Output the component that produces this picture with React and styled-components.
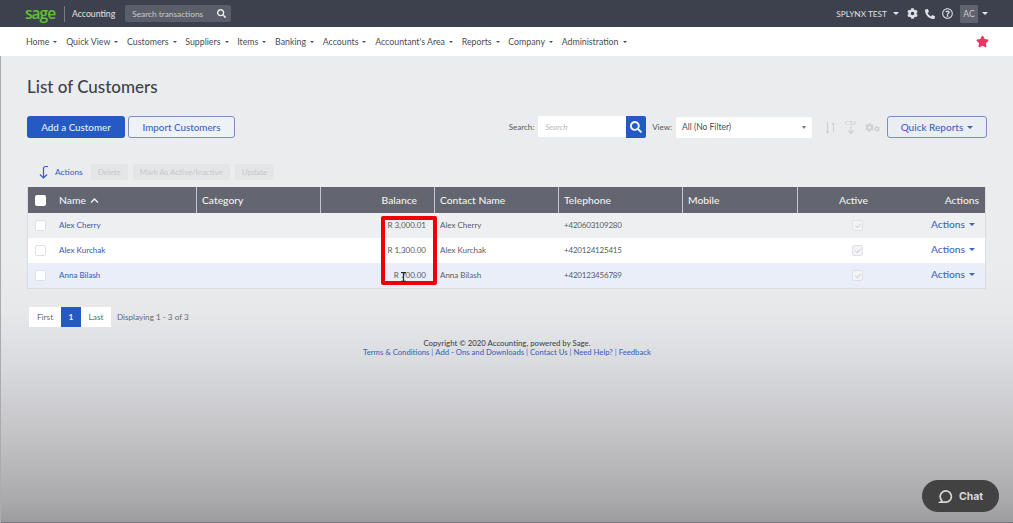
import styled, { createGlobalStyle } from "styled-components";
import { FaCog, FaPhone, FaRegQuestionCircle, FaSearch, FaStar, FaChevronUp, FaCheck } from "react-icons/fa";

const GlobalStyle = createGlobalStyle`
  html, body { margin: 0; padding: 0; }
  body { font-family: Lato, "Open Sans", sans-serif; overflow: hidden; }
  * { box-sizing: border-box; }
`;

const MENU = ["Home", "Quick View", "Customers", "Suppliers", "Items", "Banking", "Accounts", "Accountant's Area", "Reports", "Company", "Administration"];

const CUSTOMERS = [
  { name: "Alex Cherry", balance: "R 3,000.01", phone: "+420603109280", tone: "#eeeff1" },
  { name: "Alex Kurchak", balance: "R 1,300.00", phone: "+420124125415", tone: "#ffffff" },
  { name: "Anna Bilash", balance: "R 700.00", phone: "+420123456789", tone: "#e9eef9" },
];

const COLUMNS = "168px 124px 114px 124px 124px 115px 1fr";

const App = () => {
  return (
    <Page>
      <GlobalStyle />
      <TopBar>
        <Logo>sage</Logo>
        <Product>Accounting</Product>
        <SearchTransactions>
          <span>Search transactions</span>
          <FaSearch size={9} />
        </SearchTransactions>
        <TopRight>
          <Company>SPLYNX TEST</Company>
          <TopCaret />
          <TopIcons>
            <FaCog size={11} />
            <FaPhone size={10} style={{ transform: "scaleX(-1)" }} />
            <FaRegQuestionCircle size={11} />
          </TopIcons>
          <Avatar>AC</Avatar>
          <TopCaret />
        </TopRight>
      </TopBar>

      <Nav>
        {MENU.map((item) => (
          <NavItem key={item}>
            {item}
            <NavCaret />
          </NavItem>
        ))}
        <Favourite>
          <FaStar size={13} />
        </Favourite>
      </Nav>

      <Content>
        <Title>List of Customers</Title>

        <Toolbar>
          <ButtonGroup>
            <PrimaryButton>Add a Customer</PrimaryButton>
            <OutlineButton>Import Customers</OutlineButton>
          </ButtonGroup>
          <Filters>
            <FilterLabel>Search:</FilterLabel>
            <SearchField>
              <SearchInput>Search</SearchInput>
              <SearchButton>
                <FaSearch size={12} />
              </SearchButton>
            </SearchField>
            <FilterLabel>View:</FilterLabel>
            <ViewSelect>
              All (No Filter)
              <SelectCaret />
            </ViewSelect>
            <ToolIcons>
              <svg width="11" height="13" viewBox="0 0 11 13" fill="none" stroke="#cfd1d5" strokeWidth="1.1">
                <path d="M2.5 1v11M1 10l1.5 2L4 10M8.5 2v9.5M7 3.5L8.5 2" />
              </svg>
              <CsvIcon>
                CSV
                <svg width="8" height="8" viewBox="0 0 8 8" fill="none" stroke="#cfd1d5" strokeWidth="1.2">
                  <path d="M4 0v7M1 4.5L4 7.5l3-3" />
                </svg>
              </CsvIcon>
              <GearPair>
                <FaCog size={9} />
                <FaCog size={6} />
              </GearPair>
            </ToolIcons>
            <QuickReports>
              Quick Reports
              <ButtonCaret />
            </QuickReports>
          </Filters>
        </Toolbar>

        <BulkRow>
          <svg width="12" height="14" viewBox="0 0 12 14" fill="none" stroke="#2f5fc4" strokeWidth="1.2">
            <path d="M11 1.5H8.5C7.3 1.5 6.5 2.3 6.5 3.5V12.5M3 9.5l3.5 3.5L10 9.5" />
          </svg>
          <BulkLabel>Actions</BulkLabel>
          <DisabledButton>Delete</DisabledButton>
          <DisabledButton>Mark As Active/Inactive</DisabledButton>
          <DisabledButton>Update</DisabledButton>
        </BulkRow>

        <Table>
          <HeadRow>
            <HeadCell>
              <HeadCheck />
              <span>Name</span>
              <FaChevronUp size={9} />
            </HeadCell>
            <HeadCell $divided>Category</HeadCell>
            <HeadCell $divided $align="flex-end">Balance</HeadCell>
            <HeadCell $divided>Contact Name</HeadCell>
            <HeadCell $divided>Telephone</HeadCell>
            <HeadCell $divided>Mobile</HeadCell>
            <HeadCell $divided $split>
              <span>Active</span>
              <span>Actions</span>
            </HeadCell>
          </HeadRow>
          {CUSTOMERS.map((c) => (
            <Row key={c.name} $tone={c.tone}>
              <NameCell>
                <RowCheck />
                <NameLink>{c.name}</NameLink>
              </NameCell>
              <Cell />
              <BalanceCell>{c.balance}</BalanceCell>
              <Cell>{c.name}</Cell>
              <PhoneCell>{c.phone}</PhoneCell>
              <Cell />
              <EndCell>
                <ActiveCheck>
                  <FaCheck size={6} />
                </ActiveCheck>
                <RowActions>
                  Actions
                  <ButtonCaret />
                </RowActions>
              </EndCell>
            </Row>
          ))}
        </Table>

        <PagerRow>
          <Pager>
            <PageLink $width={32}>First</PageLink>
            <PageLink $width={20} $active>1</PageLink>
            <PageLink $width={30}>Last</PageLink>
          </Pager>
          <PagerText>Displaying 1 - 3 of 3</PagerText>
        </PagerRow>

        <Footer>
          <FooterLine>Copyright © 2020 Accounting, powered by Sage.</FooterLine>
          <FooterLinks>
            <a>Terms &amp; Conditions</a> | <a>Add - Ons and Downloads</a> | <a>Contact Us</a> | <a>Need Help?</a> | <a>Feedback</a>
          </FooterLinks>
        </Footer>
      </Content>

      <Annotation />
      <TextCursor width="7" height="10" viewBox="0 0 7 10" fill="none" stroke="#2b2b2b" strokeWidth="1.2">
        <path d="M1 .6h5M3.5.6v8.800M1 9.400h5" />
      </TextCursor>
      <ChatButton>
        <svg width="15" height="15" viewBox="0 0 16 16" fill="none" stroke="#d8d8d8" strokeWidth="1.8">
          <path d="M4 12.200A6 6 0 1 1 8.600 14H2.600c.8-.5 1.300-1 1.400-1.800z" />
        </svg>
        Chat
      </ChatButton>
    </Page>
  );
};

export default App;

const Page = styled.div`
  position: relative;
  width: 1013px;
  height: 523px;
  overflow: hidden;
  background: linear-gradient(180deg, #ebecee 0, #ebecee 260px, #e7e8ea 310px, #dbdce0 360px, #c2c2c5 440px, #aaaaad 500px, #9c9c9f 522px, #55565a 523px);
  box-shadow: inset 1px 0 0 #a9abaf;
`;

const TopBar = styled.header`
  display: flex;
  align-items: center;
  height: 27px;
  padding: 0 25px;
  background: #3d414d;
  color: #e6e7ea;
`;

const Logo = styled.div`
  width: 39px;
  font-family: "Open Sans", sans-serif;
  font-size: 15.5px;
  font-weight: 600;
  letter-spacing: -1px;
  line-height: 27px;
  color: #5fc42f;
`;

const Product = styled.div`
  height: 16px;
  padding-left: 7px;
  margin-right: 10px;
  border-left: 1px solid #777b85;
  font-size: 8.7px;
  line-height: 16px;
  color: #e2e3e6;
`;

const SearchTransactions = styled.div`
  display: flex;
  align-items: center;
  justify-content: space-between;
  width: 106px;
  height: 17px;
  padding: 0 5px 0 7px;
  border-radius: 2px;
  background: #5a5e69;
  font-size: 8.3px;
  color: #c8cad0;
  svg { color: #eceded; }
`;

const TopRight = styled.div`
  display: flex;
  align-items: center;
  gap: 4px;
  margin-left: auto;
  font-size: 8.3px;
  color: #dfe0e3;
`;

const Company = styled.span`
  margin-right: 2px;
`;

const TopIcons = styled.div`
  display: flex;
  align-items: center;
  gap: 7px;
  margin: 0 3px 0 4px;
`;

const TopCaret = styled.i`
  border-top: 3px solid #e6e7ea;
  border-left: 3px solid transparent;
  border-right: 3px solid transparent;
`;

const Avatar = styled.div`
  display: flex;
  align-items: center;
  justify-content: center;
  width: 18px;
  height: 18px;
  border-radius: 1px;
  background: #5f636e;
  font-size: 8.5px;
  color: #c9cbd0;
`;

const Nav = styled.nav`
  display: flex;
  align-items: center;
  gap: 8.7px;
  height: 29px;
  padding: 0 24px 0 26px;
  background: #fff;
`;

const NavItem = styled.div`
  display: flex;
  align-items: center;
  gap: 4px;
  font-size: 8.8px;
  color: #4a4d55;
`;

const NavCaret = styled.i`
  border-top: 2.5px solid #4a4d55;
  border-left: 2px solid transparent;
  border-right: 2px solid transparent;
`;

const Favourite = styled.div`
  display: flex;
  margin-left: auto;
  color: #e8365f;
`;

const Content = styled.main`
  padding: 0 26px 0 27px;
`;

const Title = styled.h1`
  margin: 0;
  padding-top: 20px;
  height: 60px;
  font-size: 17px;
  font-weight: 500;
  line-height: 22px;
  color: #3f424a;
`;

const Toolbar = styled.div`
  display: flex;
  align-items: center;
  justify-content: space-between;
  height: 22px;
`;

const ButtonGroup = styled.div`
  display: flex;
  gap: 3px;
`;

const PrimaryButton = styled.div`
  display: flex;
  align-items: center;
  justify-content: center;
  width: 98px;
  height: 22px;
  border-radius: 3px;
  background: #2559c3;
  font-size: 9.8px;
  font-weight: 500;
  color: #e8edf8;
`;

const OutlineButton = styled(PrimaryButton)`
  width: 107px;
  border: 1px solid #7b8fb8;
  background: #eef1f6;
  color: #3f65bb;
`;

const Filters = styled.div`
  display: flex;
  align-items: center;
`;

const FilterLabel = styled.span`
  margin-right: 4px;
  font-size: 8px;
  color: #55585f;
`;

const SearchField = styled.div`
  display: flex;
  margin-right: 6px;
`;

const SearchInput = styled.div`
  display: flex;
  align-items: center;
  width: 88px;
  height: 21px;
  padding-left: 7px;
  border-radius: 2px 0 0 2px;
  background: #fff;
  font-size: 8px;
  font-style: italic;
  color: #b9bbc0;
`;

const SearchButton = styled.div`
  display: flex;
  align-items: center;
  justify-content: center;
  width: 20px;
  height: 22px;
  border-radius: 0 2px 2px 0;
  background: #2559c3;
  color: #f1f4fb;
`;

const ViewSelect = styled.div`
  display: flex;
  align-items: center;
  justify-content: space-between;
  width: 136px;
  height: 21px;
  padding: 0 6px;
  border-radius: 2px;
  background: #fff;
  font-size: 8.5px;
  color: #4a4d55;
`;

const SelectCaret = styled(NavCaret)`
  border-top-color: #77797f;
  border-top-width: 3px;
`;

const ToolIcons = styled.div`
  display: flex;
  align-items: center;
  gap: 9px;
  width: 75px;
  padding-left: 13px;
  color: #cfd1d5;
`;

const CsvIcon = styled.div`
  display: flex;
  flex-direction: column;
  align-items: center;
  font-size: 6px;
  line-height: 6px;
  color: #c6c8cc;
`;

const GearPair = styled.div`
  display: flex;
  align-items: flex-end;
`;

const QuickReports = styled.div`
  display: flex;
  align-items: center;
  justify-content: center;
  gap: 4px;
  width: 100px;
  height: 22px;
  border: 1px solid #7b8fb8;
  border-radius: 3px;
  background: #eaedf2;
  font-size: 10px;
  font-weight: 500;
  color: #3f65bb;
`;

const ButtonCaret = styled.i`
  border-top: 3px solid #3f65bb;
  border-left: 3px solid transparent;
  border-right: 3px solid transparent;
`;

const BulkRow = styled.div`
  display: flex;
  align-items: center;
  gap: 5px;
  height: 16px;
  margin-top: 26px;
  padding-left: 10px;
`;

const BulkLabel = styled.span`
  margin: 0 3px 0 1px;
  font-size: 8.3px;
  font-weight: 500;
  color: #3f65bb;
`;

const DisabledButton = styled.div`
  display: flex;
  align-items: center;
  height: 16px;
  padding: 0 7px;
  border-radius: 2px;
  background: #e4e5e7;
  font-size: 7.9px;
  color: #c8c9cd;
`;

const Table = styled.div`
  width: 959px;
  margin-top: 7px;
  border: 1px solid #d9dbde;
  border-top: 0;
`;

const HeadRow = styled.div`
  display: grid;
  grid-template-columns: ${COLUMNS};
  height: 26px;
  background: #636670;
`;

const HeadCell = styled.div`
  display: flex;
  align-items: center;
  justify-content: ${(p) => (p.$split ? "space-between" : p.$align || "flex-start")};
  gap: 4px;
  padding: 0 ${(p) => (p.$split ? "6px" : "17px")} 0 ${(p) => (p.$split ? "41px" : "5px")};
  border-left: ${(p) => (p.$divided ? "1px solid #c4c6cb" : "0")};
  font-size: 10.3px;
  font-weight: 500;
  color: #f0f1f3;
`;

const HeadCheck = styled.i`
  width: 11px;
  height: 11px;
  margin: 0 9px 0 2px;
  border-radius: 2px;
  background: #fff;
`;

const Row = styled.div`
  display: grid;
  grid-template-columns: ${COLUMNS};
  height: 25px;
  background: ${(p) => p.$tone};
`;

const Cell = styled.div`
  display: flex;
  align-items: center;
  padding: 0 6px 1px;
  font-size: 8px;
  color: #595c63;
`;

const BalanceCell = styled(Cell)`
  justify-content: flex-end;
  padding-right: 8px;
`;

const PhoneCell = styled(Cell)`
  letter-spacing: -0.2px;
`;

const NameCell = styled(Cell)`
  padding-left: 7px;
`;

const RowCheck = styled.i`
  width: 11px;
  height: 11px;
  margin: 1px 13px 0 0;
  border: 1px solid #dfe1e4;
  border-radius: 2px;
  background: #fff;
`;

const NameLink = styled.span`
  font-weight: 500;
  color: #3f65bb;
`;

const EndCell = styled.div`
  display: flex;
  align-items: center;
  justify-content: space-between;
  padding: 0 10px 0 55px;
`;

const ActiveCheck = styled.div`
  display: flex;
  align-items: center;
  justify-content: center;
  width: 11px;
  height: 11px;
  border: 1px solid #e0e1e4;
  border-radius: 2px;
  background: #f3f4f5;
  color: #d8d9dc;
`;

const RowActions = styled.div`
  display: flex;
  align-items: center;
  gap: 4px;
  padding-bottom: 3px;
  font-size: 10.2px;
  font-weight: 500;
  color: #3f65bb;
`;

const PagerRow = styled.div`
  display: flex;
  align-items: center;
  gap: 6px;
  margin-top: 18px;
  padding-left: 2px;
`;

const Pager = styled.div`
  display: flex;
  height: 20px;
`;

const PageLink = styled.div`
  display: flex;
  align-items: center;
  justify-content: center;
  width: ${(p) => p.$width}px;
  background: ${(p) => (p.$active ? "#2559c3" : "#fff")};
  font-size: 8.3px;
  font-weight: ${(p) => (p.$active ? 700 : 400)};
  color: ${(p) => (p.$active ? "#f1f4fb" : "#6a6d74")};
`;

const PagerText = styled.span`
  font-size: 8.15px;
  color: #66696f;
`;

const Footer = styled.footer`
  margin-top: 12px;
  text-align: center;
  font-size: 7.7px;
  line-height: 9px;
`;

const FooterLine = styled.div`
  font-size: 7.8px;
  font-weight: 500;
  color: #45484f;
`;

const FooterLinks = styled.div`
  color: #3f65bb;
  a { font-weight: 500; color: #3f65bb; }
`;

const Annotation = styled.div`
  position: absolute;
  left: 381px;
  top: 216px;
  width: 56px;
  height: 69px;
  border: 4px solid #ee0000;
  border-radius: 2px;
`;

const TextCursor = styled.svg`
  position: absolute;
  left: 400px;
  top: 272px;
`;

const ChatButton = styled.div`
  position: absolute;
  left: 922px;
  top: 480px;
  display: flex;
  align-items: center;
  justify-content: center;
  gap: 6px;
  width: 77px;
  height: 32px;
  border-radius: 16px;
  background: #424242;
  font-family: Inter, sans-serif;
  font-size: 10.5px;
  font-weight: 700;
  color: #d8d8d8;
`;
